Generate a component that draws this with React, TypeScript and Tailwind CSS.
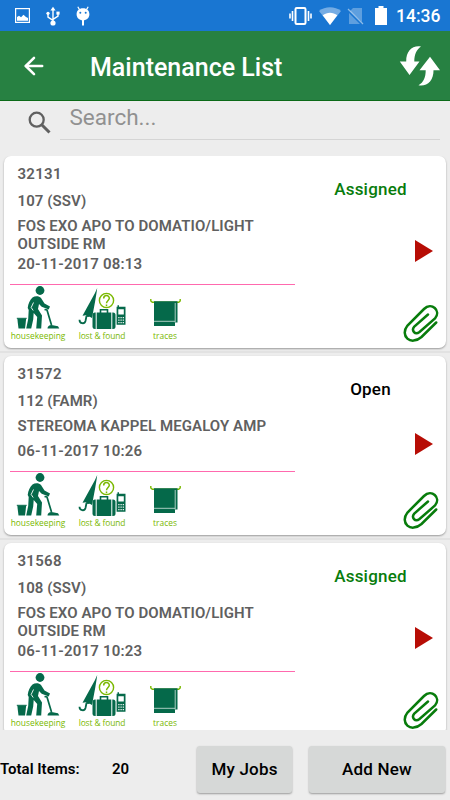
import { ArrowLeft } from 'lucide-react'

type Job = {
  id: string
  room: string
  description: string
  date: string
  status: 'Assigned' | 'Open'
}

const jobs: Job[] = [
  {
    id: '32131',
    room: '107 (SSV)',
    description: 'FOS EXO APO TO DOMATIO/LIGHT OUTSIDE RM',
    date: '20-11-2017 08:13',
    status: 'Assigned',
  },
  {
    id: '31572',
    room: '112 (FAMR)',
    description: 'STEREOMA KAPPEL MEGALOY AMP',
    date: '06-11-2017 10:26',
    status: 'Open',
  },
  {
    id: '31568',
    room: '108 (SSV)',
    description: 'FOS EXO APO TO DOMATIO/LIGHT OUTSIDE RM',
    date: '06-11-2017 10:23',
    status: 'Assigned',
  },
]

function StatusBar() {
  return (
    <div className="flex h-[31px] shrink-0 items-center bg-[#1976d2] pl-[15px] pr-[10px] text-white">
      <svg className="h-[15px] w-[15px]" viewBox="0 0 15 15" fill="none">
        <rect x=".6" y=".6" width="13.8" height="13.8" stroke="currentColor" strokeWidth="1.2" />
        <path d="M2 12.7V9l2-1.2 2 1.5 2.5-2.5L11 9l2 1v2.7z" fill="currentColor" />
      </svg>
      <svg className="ml-[16px] h-[20px] w-[14px]" viewBox="0 0 14 20" fill="none" stroke="currentColor">
        <path d="M7 3v13M2 8v3.2l5 3.2M12 7v3.2l-5 3.2" strokeWidth="1.4" />
        <path d="M7 .8 9.6 4.5H4.4z" fill="currentColor" stroke="none" />
        <circle cx="2" cy="7.3" r="1.6" fill="currentColor" stroke="none" />
        <path d="M10.4 5.6h3.2v3h-3.2z" fill="currentColor" stroke="none" />
        <circle cx="7" cy="17" r="2.6" fill="currentColor" stroke="none" />
      </svg>
      <svg className="ml-[16px] h-[20px] w-[14px]" viewBox="0 0 14 20">
        <path d="M1.8.8 3.5 3.6M12.2.8l-1.7 2.8" stroke="currentColor" strokeWidth="1.2" />
        <path d="M7 2.200c4 0 6.400 2.500 6.400 6 0 3.400-2.400 6-6.400 6s-6.400-2.600-6.400-6c0-3.500 2.400-6 6.400-6z" fill="currentColor" />
        <path d="M7 13v6.5" stroke="currentColor" strokeWidth="2" />
        <circle cx="4.3" cy="6.7" r="1" fill="#1976d2" />
        <circle cx="9.7" cy="6.7" r="1" fill="#1976d2" />
      </svg>
      <svg className="ml-auto h-[18px] w-[23px]" viewBox="0 0 23 18" fill="none" stroke="currentColor">
        <rect x="6.5" y="1" width="10" height="16" rx="1.2" strokeWidth="2" />
        <path d="M3.5 4v10M19.5 4v10" strokeWidth="1.6" />
        <path d="M1 6.5v5M22 6.5v5" strokeWidth="1.6" />
      </svg>
      <svg className="ml-[7px] h-[18px] w-[22px]" viewBox="0 0 22 18" fill="currentColor">
        <path d="M0 4C6-1 16-1 22 4L11 18z" opacity=".4" />
        <path d="M3.7 8.2c4.3-3.4 10.3-3.4 14.6 0L11 18z" />
      </svg>
      <svg className="ml-[6px] h-[18px] w-[17px]" viewBox="0 0 17 18">
        <path d="M6 1h9v14L3 4zM2 6l11 11H2z" fill="currentColor" opacity=".3" />
        <path d="m1 2 15 15" stroke="currentColor" strokeWidth="1.3" opacity=".5" />
      </svg>
      <svg className="ml-[11px] h-[19px] w-[12px]" viewBox="0 0 12 19" fill="currentColor">
        <path d="M3.5 0h5v2H12v17H0V2h3.5z" />
      </svg>
      <span className="ml-[9px] w-[44px] whitespace-nowrap text-[17.5px] leading-[20px] font-medium">14:36</span>
    </div>
  )
}

function RefreshIcon() {
  return (
    <svg className="h-[42px] w-[42px]" viewBox="0 0 42 42" fill="#fff">
      <path d="M22 1.500C13.500 0 7 6 7.200 16.500H.8L10.500 30l10-13.500h-5.200C15.300 9.500 17.500 4.500 22 1.500z" />
      <path d="M19.500 40.300c8.500 1.500 15.200-4.500 15-15H41L31 11.800 20.500 25.300h6.200c0 7-2 12-7.200 15z" />
    </svg>
  )
}

function HousekeepingIcon() {
  return (
    <svg className="h-[43px] w-[44px]" viewBox="0 0 44 43" fill="#05694a">
      <path d="M1.300 32.500h8.900L9 42.500H2.500z" />
      <path d="M.8 32.300h9.900" stroke="#05694a" />
      <circle cx="24" cy="4.500" r="4.400" />
      <path d="M16.500 11.500c2.500-1.700 6.500-1.700 8.500.5l3.500 5.500 5.500 3-1.300 3-7-2.700-2.700-2.800-1 5 4 6.500-.8 13h-5l1-11.500-3.500-4-.5 6.500-2 9h-5l2-9.500.5-9-1-2c.5-4.500 2.300-8 4.800-10.500z" />
      <path d="m17.500 16.500-2.300 5 2 3" fill="none" stroke="#fff" strokeWidth=".9" />
      <path d="m28.500 23.500 2.500.5 4.500 15" fill="none" stroke="#05694a" strokeWidth="1.700" />
      <path d="M31.500 42.500c0-2.200 1.700-3.500 4-3.500l6.500 1.300 1.300 2.200z" />
    </svg>
  )
}

function LostFoundIcon() {
  return (
    <svg className="h-[42px] w-[49px]" viewBox="0 0 49 42">
      <path d="M19.200 0 17 5 4.500 27.700l3.300-.4 1.700 1.700 2.200-.3 2.300 1.300 3.200-17L18.500 5z" fill="#05694a" />
      <path d="M8.500 28 7.500 33c-1 3.500-6 2.800-6-1.300" fill="none" stroke="#05694a" strokeWidth="1.800" />
      <circle cx="28.500" cy="12.500" r="7.100" fill="none" stroke="#7ab800" strokeWidth="1.400" />
      <path d="M25.700 10.500c0-3.900 5.600-3.900 5.600-.2 0 2-2.800 2.400-2.800 5M28.500 16.500v1.700" fill="none" stroke="#7ab800" strokeWidth="1.500" />
      <path d="M22.500 25v-3.200h7V25" fill="none" stroke="#05694a" strokeWidth="1.600" />
      <rect x="14.500" y="24.500" width="23" height="16.500" rx="2.500" fill="#05694a" />
      <path d="M18.200 24v18M33.800 24v18" stroke="#fff" />
      <path d="M38.600 18.700h.9v-1.500H41v1.500h6.500v18h-8.900z" fill="#05694a" />
      <path d="M40.300 21.200h5.500v5.300h-5.500zM40.300 29h1.200v1.200h-1.200zM42.500 29h1.200v1.200h-1.200zM44.700 29h1.200v1.200h-1.200zM40.300 31.500h1.200v1.200h-1.200zM42.500 31.500h1.200v1.200h-1.200zM44.700 31.500h1.200v1.200h-1.200zM40.300 34h1.200v1.200h-1.200zM42.500 34h1.200v1.200h-1.200zM44.700 34h1.200v1.200h-1.200z" fill="#fff" />
    </svg>
  )
}

function TracesIcon() {
  return (
    <svg className="h-[27px] w-[31px]" viewBox="0 0 31 27">
      <path d="M.8 0v2l1.500 1.200h26.400L30.200 2V0" fill="none" stroke="#7ab800" strokeWidth="1.400" />
      <path d="M4 2.300h23.500v21.200H25V27H4z" fill="#05694a" />
      <path d="M4 22.300h21M25.200 4v19.500" stroke="#bcd8ce" strokeWidth=".9" />
    </svg>
  )
}

function Paperclip() {
  return (
    <svg className="h-[38px] w-[36px]" viewBox="0 0 36 38" fill="none" stroke="#087c0c" strokeWidth="2.500" strokeLinecap="round">
      <path d="M33.200 18.500 18.500 33C7.500 42.500-3.500 31.500 4.500 21.500L21 5c7.500-7.500 17.500 1.500 11 9.500L16.500 28c-4.500 3.500-8.500-1.500-5.200-5.500L25 10.500" />
    </svg>
  )
}

function JobCard({ job }: { job: Job }) {
  return (
    <div className="flex rounded-[7px] bg-white shadow-[0_1px_2px_rgba(0,0,0,0.35)]">
      <div className="w-[291px] shrink-0 pl-[6px] pt-[9px]">
        <div className="pl-[7.5px] text-[15px] leading-[18px] font-semibold tracking-[0.08px] text-[#606060]">
          <p className="h-[19px] leading-[19px] tracking-[0.3px]">{job.id}</p>
          <p className="mt-[8px]">{job.room}</p>
          <p className="mt-[8px] min-h-[22px] w-[260px] leading-[17.5px]">{job.description}</p>
          <p className="mt-[2px] tracking-[0.2px]">{job.date}</p>
        </div>
        <div className="mt-[11px] h-px w-[285px] bg-[#ff69ae]" />
        <div className="flex h-[63px] font-['Open_Sans',sans-serif] text-[8.4px] leading-[12px] text-[#7ab800]">
          <div className="flex w-[56px] flex-col items-center pt-px">
            <HousekeepingIcon />
            <span className="mt-px">housekeeping</span>
          </div>
          <div className="ml-[10px] flex w-[52px] flex-col items-center pt-[3px]">
            <LostFoundIcon />
            <span className="whitespace-nowrap tracking-[-0.1px]">lost &amp; found</span>
          </div>
          <div className="ml-[20px] flex w-[34px] flex-col items-center pt-[14px]">
            <TracesIcon />
            <span className="mt-[4px]">traces</span>
          </div>
        </div>
      </div>
      <div className="flex min-w-0 flex-1 flex-col">
        <p
          className={
            job.status === 'Assigned'
              ? 'w-[151px] pt-[23px] text-center text-[17px] leading-[20px] font-medium tracking-[0.2px] text-[#087c0c]'
              : 'w-[151px] pt-[23px] text-center text-[17px] leading-[20px] font-medium tracking-[0.2px] text-black'
          }
        >
          {job.status}
        </p>
        <div className="flex flex-1 flex-col items-end pr-[7px]">
          <svg className="my-auto mr-[6px] h-[22px] w-[18px] -translate-y-[1px]" viewBox="0 0 18 22">
            <path d="M0 0v22l18-11z" fill="#b70d05" />
          </svg>
          <div className="mb-[6px]">
            <Paperclip />
          </div>
        </div>
      </div>
    </div>
  )
}

const buttonClass =
  'h-[47px] rounded-[3px] bg-[#d6d8d7] text-[17px] font-medium tracking-[0.2px] text-black shadow-[0_1px_2px_rgba(0,0,0,0.35)]'

export default function App() {
  return (
    <div className="flex h-[800px] w-[450px] flex-col overflow-hidden bg-[#ededed] font-['Roboto',sans-serif]">
      <StatusBar />
      <header className="flex h-[70px] shrink-0 items-center border-b border-[#0b6a18] bg-[#278142] pl-[20px] pr-[9px]">
        <ArrowLeft className="size-7 text-white" strokeWidth={2.2} />
        <h1 className="ml-[42px] pt-[4px] text-[25px] leading-[30px] font-medium text-white">Maintenance List</h1>
        <div className="ml-auto">
          <RefreshIcon />
        </div>
      </header>

      <div className="flex h-[55px] shrink-0 pl-[28px] pr-[10px]">
        <svg className="mt-[10px] h-[23px] w-[23px]" viewBox="0 0 23 23" fill="none" stroke="#606060">
          <circle cx="8.7" cy="8.7" r="7" strokeWidth="2.3" />
          <path d="m14 14 7.5 7.5" strokeWidth="3" />
        </svg>
        <div className="ml-[9px] h-[39px] flex-1 border-b border-[#d5d5d5] pl-[9.5px] text-[22.5px] leading-[33px] text-[#919191]">
          Search...
        </div>
      </div>

      <div className="flex h-[574px] shrink-0 flex-col overflow-hidden px-1">
        {jobs.map((job, i) => (
          <div key={job.id} className="shrink-0">
            {i > 0 && <div className="-mx-1 my-[3px] h-[2px] bg-[#e2e2e2]" />}
            <JobCard job={job} />
          </div>
        ))}
      </div>

      <footer className="flex flex-1 items-start pt-[16px]">
        <span className="w-[112px] pt-[13px] text-[15px] leading-[20px] font-semibold">Total Items:</span>
        <span className="w-[85px] pt-[13px] text-[15px] leading-[20px] font-semibold">20</span>
        <button className={`${buttonClass} w-[95px]`}>My Jobs</button>
        <button className={`${buttonClass} ml-[17px] w-[136px]`}>Add New</button>
      </footer>
    </div>
  )
}
